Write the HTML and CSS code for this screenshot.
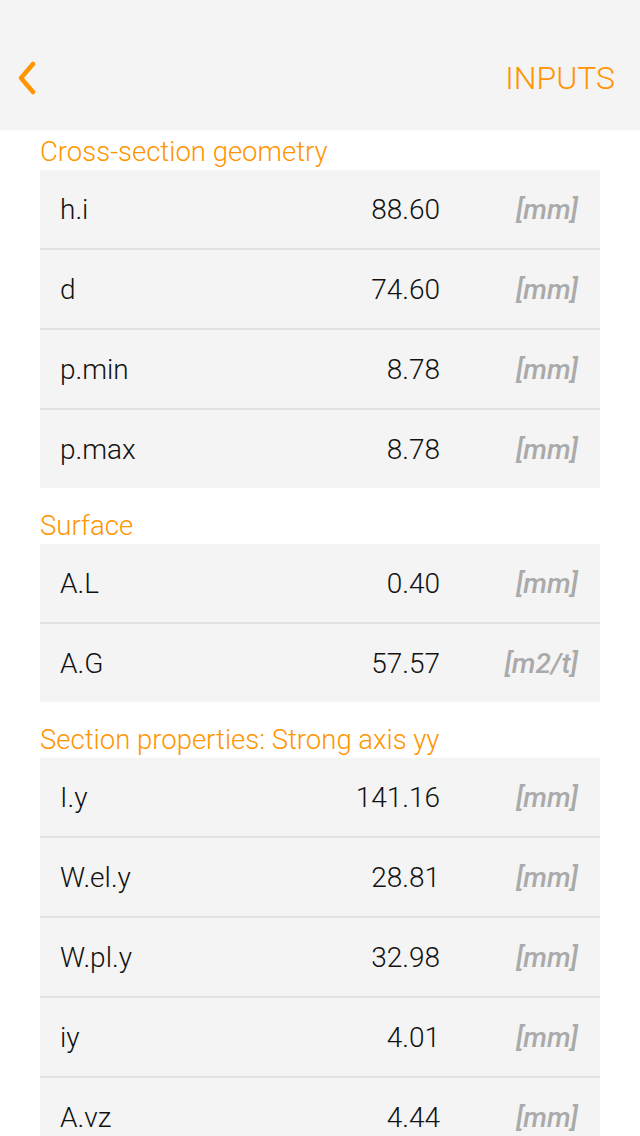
FILE: index.html
```html
<!DOCTYPE html>
<html>
<head>
<meta charset="utf-8">
<link rel="stylesheet" href="styles.css">
</head>
<body>
<header class="nav">
  <div class="back">
    <svg width="24" height="34" viewBox="0 0 24 34"><path d="M19 3 L7 17 L19 31" fill="none" stroke="#ff9500" stroke-width="4.5" stroke-linecap="round" stroke-linejoin="round"/></svg>
  </div>
  <div class="title">INPUTS</div>
</header>
<main class="content">
  <section class="group first">
    <h2 class="ghead">Cross-section geometry</h2>
    <div class="rows">
      <div class="row"><span class="lbl">h.i</span><span class="val">88.60</span><span class="unit">[mm]</span></div>
      <div class="row"><span class="lbl">d</span><span class="val">74.60</span><span class="unit">[mm]</span></div>
      <div class="row"><span class="lbl">p.min</span><span class="val">8.78</span><span class="unit">[mm]</span></div>
      <div class="row"><span class="lbl">p.max</span><span class="val">8.78</span><span class="unit">[mm]</span></div>
    </div>
  </section>
  <section class="group">
    <h2 class="ghead">Surface</h2>
    <div class="rows">
      <div class="row"><span class="lbl">A.L</span><span class="val">0.40</span><span class="unit">[mm]</span></div>
      <div class="row"><span class="lbl">A.G</span><span class="val">57.57</span><span class="unit">[m2/t]</span></div>
    </div>
  </section>
  <section class="group">
    <h2 class="ghead">Section properties: Strong axis yy</h2>
    <div class="rows">
      <div class="row"><span class="lbl">I.y</span><span class="val">141.16</span><span class="unit">[mm]</span></div>
      <div class="row"><span class="lbl">W.el.y</span><span class="val">28.81</span><span class="unit">[mm]</span></div>
      <div class="row"><span class="lbl">W.pl.y</span><span class="val">32.98</span><span class="unit">[mm]</span></div>
      <div class="row"><span class="lbl">iy</span><span class="val">4.01</span><span class="unit">[mm]</span></div>
      <div class="row"><span class="lbl">A.vz</span><span class="val">4.44</span><span class="unit">[mm]</span></div>
    </div>
  </section>
</main>
</body>
</html>
```
FILE: styles.css
```css
html, body {
  margin: 0;
  padding: 0;
  background: #ffffff;
  height: 1136px;
  overflow: hidden;
  font-family: "Roboto", "Liberation Sans", sans-serif;
  font-weight: 300;
}
.nav {
  height: 130px;
  background: #f4f4f4;
  display: flex;
  align-items: center;
  justify-content: space-between;
  padding: 26px 25px 0 14px;
  box-sizing: border-box;
}
.back {
  display: flex;
  align-items: center;
}
.back svg { display: block; }
.title {
  color: #ff9500;
  font-size: 32px;
  font-weight: 300;
}
.content {
  padding: 0 40px;
}
.group {
  margin-top: 16px;
}
.group.first { margin-top: 0; }
.ghead {
  margin: 0;
  height: 40px;
  display: flex;
  align-items: flex-end;
  padding-bottom: 2px;
  box-sizing: border-box;
  color: #ff9500;
  font-size: 27.5px;
  font-weight: 300;
}
.rows {
  display: flex;
  flex-direction: column;
  gap: 2px;
  background: #e2e2e2;
}
.row {
  height: 78px;
  background: #f4f4f4;
  display: flex;
  align-items: center;
  padding: 0 22px 0 20px;
  color: #111111;
  font-size: 28px;
}
.lbl { flex: 1; }
.val {
  width: 140px;
  text-align: right;
}
.unit {
  width: 138px;
  text-align: right;
  color: #aaaaaa;
  font-style: italic;
  font-weight: 500;
  font-size: 28px;
}
```
